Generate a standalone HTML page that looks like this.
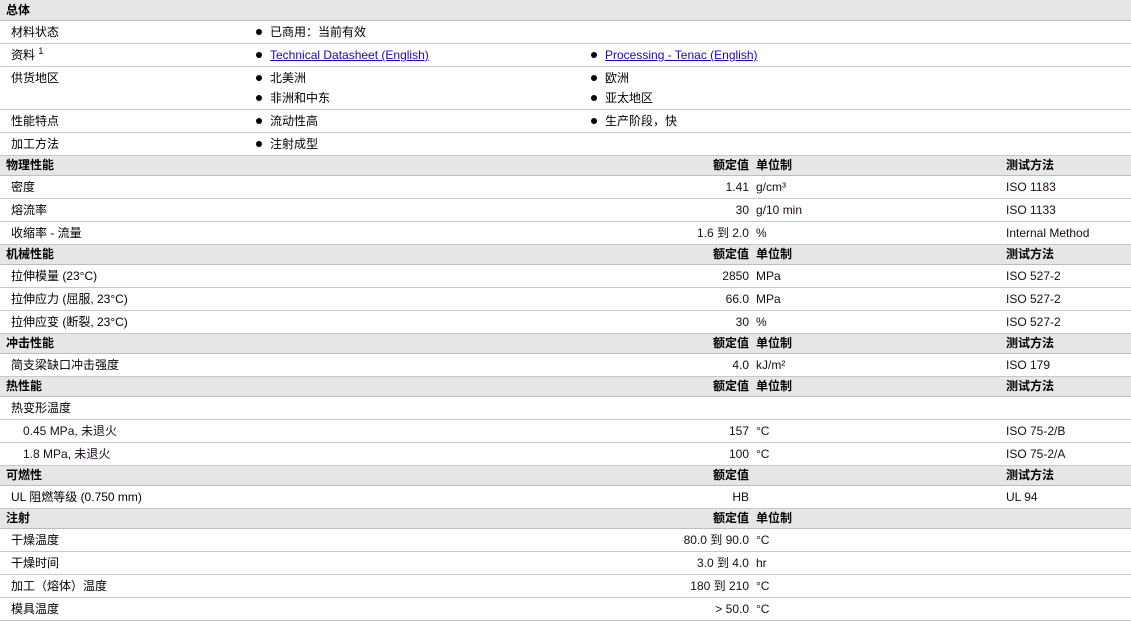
<!DOCTYPE html>
<html><head><meta charset="utf-8"><style>
body{margin:0;width:1131px;height:617px;overflow:hidden;background:#fff;font-family:"Liberation Sans","Noto Sans CJK SC",sans-serif;font-size:12px;color:#000}
.r{position:relative;height:22px;border-bottom:1px solid #c8c8c8;line-height:22px;white-space:nowrap}
.h{height:19px;line-height:19px;background:#e6e6e6;font-weight:bold;border-bottom:1px solid #bdbdbd}
.r span{position:absolute;top:0}
.l{left:11px}.hl{left:6px}
.b1{left:256px}.b2{left:591px}
.b1:before,.b2:before{content:"";display:inline-block;width:6px;height:6px;border-radius:50%;background:#000;margin-right:8px;vertical-align:1px}
.v{right:382px;color:#1a0a1a}.u{left:756px;color:#1a0a1a}.t{left:1006px;color:#1a0a1a}
a{color:#2200cc;text-decoration:underline}
.two{height:42px}
.two span.s2{top:20px}
</style></head><body>
<div class="r h" style="height:20px;line-height:20px"><span class="hl">总体</span></div>
<div class="r"><span class="l">材料状态</span><span class="b1">已商用：当前有效</span></div>
<div class="r"><span class="l">资料 <sup style="font-size:9px;line-height:0">1</sup></span><span class="b1"><a>Technical Datasheet (English)</a></span><span class="b2"><a>Processing - Tenac (English)</a></span></div>
<div class="r two"><span class="l">供货地区</span><span class="b1">北美洲</span><span class="b2">欧洲</span><span class="b1 s2">非洲和中东</span><span class="b2 s2">亚太地区</span></div>
<div class="r"><span class="l">性能特点</span><span class="b1">流动性高</span><span class="b2">生产阶段，快</span></div>
<div class="r"><span class="l">加工方法</span><span class="b1">注射成型</span></div>
<div class="r h"><span class="hl">物理性能</span><span class="v" style="color:#000">额定值</span><span class="u" style="color:#000">单位制</span><span class="t" style="color:#000">测试方法</span></div>
<div class="r"><span class="l">密度</span><span class="v">1.41</span><span class="u">g/cm³</span><span class="t">ISO 1183</span></div>
<div class="r"><span class="l">熔流率</span><span class="v">30</span><span class="u">g/10 min</span><span class="t">ISO 1133</span></div>
<div class="r"><span class="l">收缩率 - 流量</span><span class="v">1.6 到 2.0</span><span class="u">%</span><span class="t">Internal Method</span></div>
<div class="r h"><span class="hl">机械性能</span><span class="v" style="color:#000">额定值</span><span class="u" style="color:#000">单位制</span><span class="t" style="color:#000">测试方法</span></div>
<div class="r"><span class="l">拉伸模量 (23°C)</span><span class="v">2850</span><span class="u">MPa</span><span class="t">ISO 527-2</span></div>
<div class="r"><span class="l">拉伸应力 (屈服, 23°C)</span><span class="v">66.0</span><span class="u">MPa</span><span class="t">ISO 527-2</span></div>
<div class="r"><span class="l">拉伸应变 (断裂, 23°C)</span><span class="v">30</span><span class="u">%</span><span class="t">ISO 527-2</span></div>
<div class="r h"><span class="hl">冲击性能</span><span class="v" style="color:#000">额定值</span><span class="u" style="color:#000">单位制</span><span class="t" style="color:#000">测试方法</span></div>
<div class="r"><span class="l">简支梁缺口冲击强度</span><span class="v">4.0</span><span class="u">kJ/m²</span><span class="t">ISO 179</span></div>
<div class="r h"><span class="hl">热性能</span><span class="v" style="color:#000">额定值</span><span class="u" style="color:#000">单位制</span><span class="t" style="color:#000">测试方法</span></div>
<div class="r"><span class="l">热变形温度</span></div>
<div class="r"><span class="l" style="left:23px;color:#1a0a1a">0.45 MPa, 未退火</span><span class="v">157</span><span class="u">°C</span><span class="t">ISO 75-2/B</span></div>
<div class="r"><span class="l" style="left:23px;color:#1a0a1a">1.8 MPa, 未退火</span><span class="v">100</span><span class="u">°C</span><span class="t">ISO 75-2/A</span></div>
<div class="r h"><span class="hl">可燃性</span><span class="v" style="color:#000">额定值</span><span class="t" style="color:#000">测试方法</span></div>
<div class="r"><span class="l">UL 阻燃等级 (0.750 mm)</span><span class="v">HB</span><span class="t">UL 94</span></div>
<div class="r h"><span class="hl">注射</span><span class="v" style="color:#000">额定值</span><span class="u" style="color:#000">单位制</span></div>
<div class="r"><span class="l">干燥温度</span><span class="v">80.0 到 90.0</span><span class="u">°C</span></div>
<div class="r"><span class="l">干燥时间</span><span class="v">3.0 到 4.0</span><span class="u">hr</span></div>
<div class="r"><span class="l">加工（熔体）温度</span><span class="v">180 到 210</span><span class="u">°C</span></div>
<div class="r"><span class="l">模具温度</span><span class="v">&gt; 50.0</span><span class="u">°C</span></div>
</body></html>
